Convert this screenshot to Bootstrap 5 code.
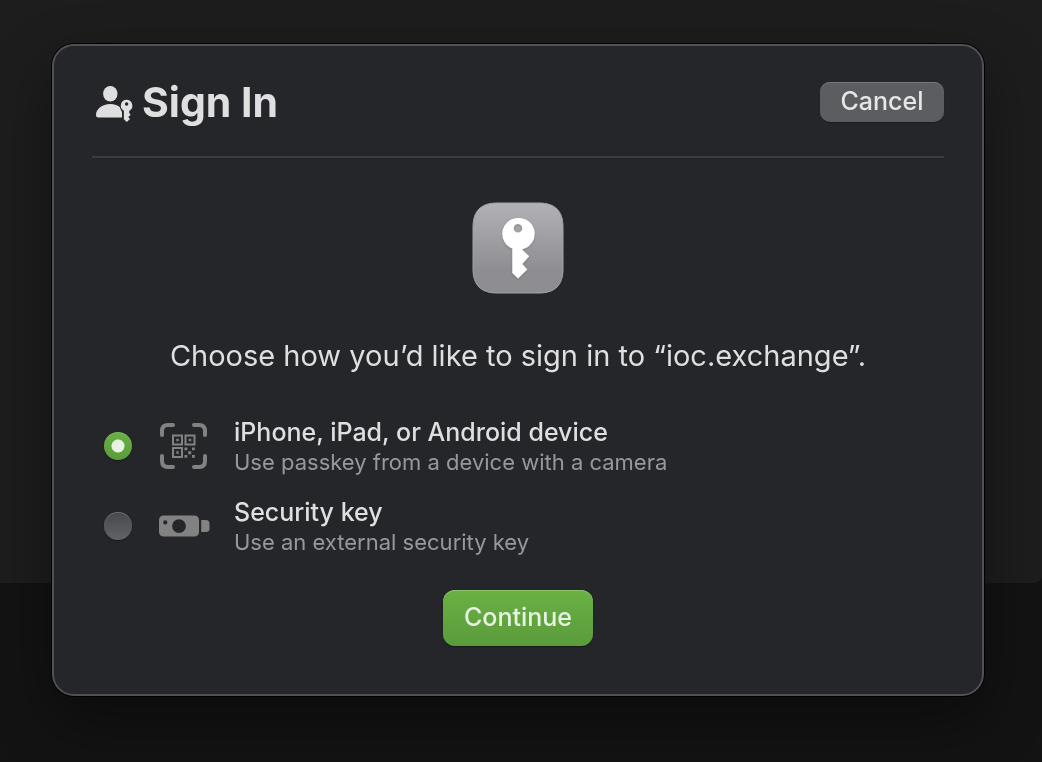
<!DOCTYPE html>
<html lang="en" data-bs-theme="dark">
<head>
<meta charset="utf-8">
<meta name="viewport" content="width=device-width, initial-scale=1">
<title>Sign In</title>
<link rel="stylesheet" href="https://cdn.jsdelivr.net/npm/bootstrap@5.3.0/dist/css/bootstrap.min.css">
<style>
body { background: #131313; color: #dfdfe0; font-family: Inter, "Liberation Sans", sans-serif; }
.backdrop-window { position: fixed; inset: 0 0 auto; height: 76.5vh; background: #1d1d1d; border-bottom-right-radius: 8px; }
.page { padding: 44px 58px 66px 52px; }
.sheet { position: relative; background: #25262a; border: 2px solid #505154; border-radius: 22px; padding: 36px 38px 48px; box-shadow: 0 0 0 1px #000, 0 24px 60px rgba(0,0,0,.4); }
.sheet-header { padding-bottom: 34px; border-bottom: 2px solid #3b3c40; }
.sheet-title { font-size: 41px; line-height: 42px; font-weight: 700; color: #dfdfe0; }
.sheet-brand { height: 40px; }
.btn-plain, .btn-go { font-size: 25px; font-weight: 500; border: 0; padding: 0 20px; }
.btn-plain { height: 40px; line-height: 38px; padding-bottom: 2px; border-radius: 10px; min-width: 124px; color: #e6e6e7; background: #5c5d60; box-shadow: inset 0 1px #77787b, 0 1px 1px rgba(0,0,0,.3); }
.btn-go { height: 56px; border-radius: 12px; min-width: 150px; color: #e7f2e2; background: linear-gradient(#6ab144, #5a9b3b); box-shadow: inset 0 1px #8ac46c, 0 1px 2px rgba(0,0,0,.35); }
.btn-plain:hover { background: #68696c; color: #fff; }
.btn-go:hover { background: #6ab144; color: #fff; }
.app-icon { margin: 44px auto 42px; }
.prompt { font-size: 29px; line-height: 40px; margin-bottom: 40px; }
.choices { display: grid; gap: 20px; padding-left: 12px; margin-bottom: 34px; }
.choice { min-height: 60px; }
.form-check-input.dot { flex: none; width: 28px; height: 28px; margin: 0 26px 0 0; border: 0; background: linear-gradient(#47484b, #626366); box-shadow: inset 0 1px #6a6b6e, 0 1px 2px rgba(0,0,0,.3); }
.form-check-input.dot:checked { background: radial-gradient(circle, #e7f2e2 6px, transparent 7px), linear-gradient(#6ab144, #5a9b3b); box-shadow: inset 0 1px #7fbc60, 0 1px 2px rgba(0,0,0,.3); }
.choice-art { flex: none; margin-right: 24px; }
.choice-name { font-size: 25px; line-height: 32px; font-weight: 500; }
.choice-note { font-size: 22px; line-height: 28px; color: #98989b; }
</style>
</head>
<body>
<div class="backdrop-window"></div>
<main class="page">
  <section class="sheet" role="dialog" aria-labelledby="title">
    <header class="sheet-header d-flex align-items-center justify-content-between">
      <div class="sheet-brand d-flex align-items-center">
        <svg class="ms-1 me-2" width="38" height="40" viewBox="0 0 38 40" fill="#dfdfe0" aria-hidden="true">
          <ellipse cx="14.300" cy="11.800" rx="7.200" ry="7.800"/>
          <path d="M2.500 35.500Q0 35.500 0 33C0 27 6 22 14.300 22C18.500 22 22 23.300 24.200 25.500Q24.700 28 26 30V35.500Z"/>
          <path stroke="#25262a" stroke-width="1.600" paint-order="stroke" d="M30.600 17.700a5.900 5.900 0 0 0-2.700 11.100V37.200L30.800 40L34 37.100L32.200 35.100L34.600 32.900L33.100 30.600L33.400 28.700A5.900 5.900 0 0 0 30.600 17.700Z"/>
          <circle cx="30.600" cy="22" r="1.700" fill="#25262a"/>
        </svg>
        <h1 class="sheet-title mb-0" id="title">Sign In</h1>
      </div>
      <button type="button" class="btn btn-plain">Cancel</button>
    </header>

    <svg class="app-icon d-block" width="92" height="92" viewBox="0 0 92 92" aria-hidden="true">
      <defs>
        <linearGradient id="steel" x1="0" y1="0" x2="0" y2="1"><stop offset="0" stop-color="#b2b1b5"/><stop offset=".75" stop-color="#8e8d92"/><stop offset="1" stop-color="#8e8d92"/></linearGradient>
        <filter id="lift" x="-30%" y="-20%" width="160%" height="140%"><feDropShadow dx="0" dy="1" stdDeviation="1" flood-opacity=".2"/></filter>
      </defs>
      <path fill="url(#steel)" stroke="#a3a2a7" stroke-width="1" d="M25 1H67C83 1 91 9 91 25V67C91 83 83 91 67 91H25C9 91 1 83 1 67V25C1 9 9 1 25 1Z"/>
      <path filter="url(#lift)" fill="#fff" fill-rule="evenodd" d="M46 16a15.800 15.800 0 0 0-5.700 30.500V71L46 76.500L55.300 67.500L50.300 62L57.200 54.300L50.300 47.800V47.200A15.800 15.800 0 0 0 46 16ZM46 22a4.300 4.300 0 1 1 0 8.600a4.300 4.300 0 1 1 0-8.600Z"/>
    </svg>

    <p class="prompt text-center">Choose how you’d like to sign in to “ioc.exchange”.</p>

    <form>
      <div class="choices">
        <label class="choice d-flex align-items-center" for="device">
          <input class="form-check-input dot" type="radio" name="method" id="device" checked>
          <svg class="choice-art" width="52" height="48" viewBox="0 0 52 48" fill="none" stroke="#828283" aria-hidden="true">
            <path stroke-width="4" stroke-linecap="round" d="M4 13V9Q4 3 10 3H15M36 3H41Q47 3 47 9V13M47 34V39Q47 45 41 45H36M15 45H10Q4 45 4 39V34"/>
            <path stroke-width="2" d="M15 13.500H24V22.500H15ZM27.500 13.500H36.500V22.500H27.500ZM15 26H24V35H15Z"/>
            <path fill="#828283" stroke="none" d="M18.300 16.800h2.400v2.400h-2.400zM30.800 16.800h2.400v2.400h-2.400zM18.300 29.300h2.400v2.400h-2.400zM26.500 25.500h2.800v2.800h-2.800zM34 25.500h2.800v2.800h-2.800zM30.200 29.200h3v3h-3zM26.500 33h2.800v2.800h-2.800zM34 33h2.800v2.800h-2.800z"/>
          </svg>
          <span>
            <span class="choice-name d-block">iPhone, iPad, or Android device</span>
            <span class="choice-note d-block">Use passkey from a device with a camera</span>
          </span>
        </label>
        <label class="choice d-flex align-items-center" for="hardware">
          <input class="form-check-input dot" type="radio" name="method" id="hardware">
          <svg class="choice-art" width="52" height="22" viewBox="0 0 52 22" fill="#828283" aria-hidden="true">
            <path fill-rule="evenodd" d="M6 0.500H36Q41 .5 41 5.500V16.500Q41 21.500 36 21.500H6Q1 21.500 1 16.500V5.500Q1 .5 6 .5ZM21 4.200a6.900 6.900 0 1 0 0 13.800a6.900 6.900 0 1 0 0-13.800ZM7.300 5.300a2.100 2.100 0 1 0 0 4.200a2.100 2.100 0 1 0 0-4.200Z"/>
            <path d="M43.200 5H48Q51.500 5 51.500 8.500V13.500Q51.500 17 48 17H43.200Z"/>
          </svg>
          <span>
            <span class="choice-name d-block">Security key</span>
            <span class="choice-note d-block">Use an external security key</span>
          </span>
        </label>
      </div>
      <div class="d-flex justify-content-center">
        <button type="button" class="btn btn-go">Continue</button>
      </div>
    </form>
  </section>
</main>
<script src="https://cdn.jsdelivr.net/npm/bootstrap@5.3.0/dist/js/bootstrap.bundle.min.js"></script>
</body>
</html>
